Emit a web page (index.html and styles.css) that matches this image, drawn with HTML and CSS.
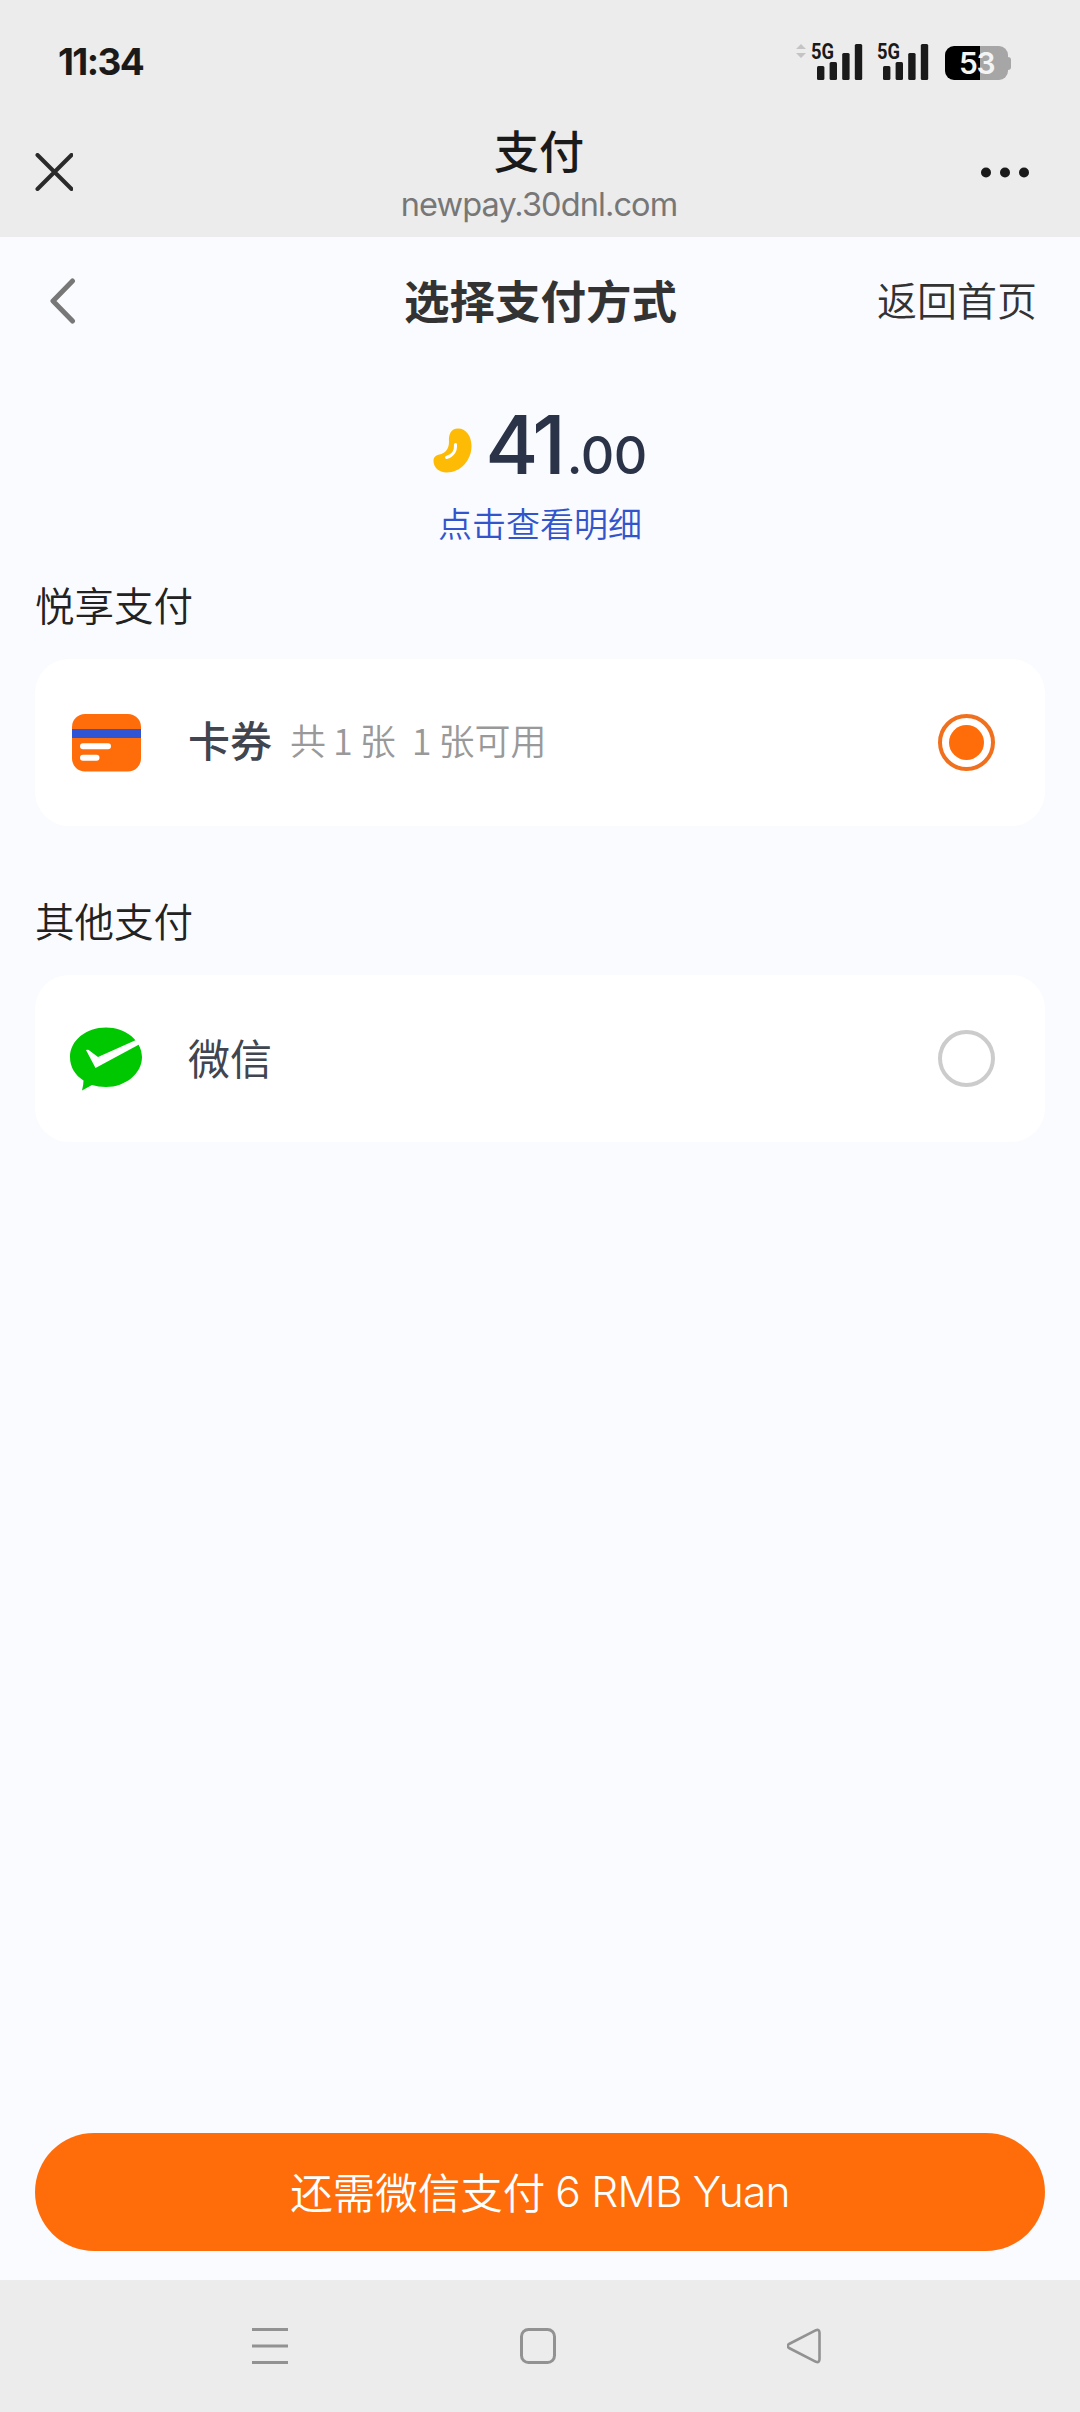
FILE: index.html
```html
<!DOCTYPE html>
<html lang="zh-CN">
<head>
  <meta charset="UTF-8" />
  <meta name="viewport" content="width=device-width, initial-scale=1.0"/>
  <title>支付</title>
  <link rel="stylesheet" href="styles.css">
</head>
<body>

  <div class="status-bar">
    <span class="time">11:34</span>
    <div class="status-icons">
      <svg class="signals" width="134" height="54" viewBox="795 32 134 54">
        <path d="M796 49l5-5 5 5zM796 53h10l-5 5z" fill="#c4c4c4"/>
        <g fill="#1a1a1a">
          <text class="net" x="811" y="59" textLength="23" lengthAdjust="spacingAndGlyphs">5G</text>
          <rect x="817" y="66" width="7.4" height="14" rx="1.5"/>
          <rect x="829.6" y="62" width="7.4" height="18" rx="1.5"/>
          <rect x="842.2" y="53" width="7.4" height="27" rx="1.5"/>
          <rect x="854.8" y="44" width="7.4" height="36" rx="1.5"/>
          <text class="net" x="877" y="59" textLength="23" lengthAdjust="spacingAndGlyphs">5G</text>
          <rect x="883" y="66" width="7.4" height="14" rx="1.5"/>
          <rect x="895.6" y="62" width="7.4" height="18" rx="1.5"/>
          <rect x="908.2" y="53" width="7.4" height="27" rx="1.5"/>
          <rect x="920.8" y="44" width="7.4" height="36" rx="1.5"/>
        </g>
      </svg>
      <div class="battery"><span>53</span></div>
    </div>
  </div>

  <header class="browser-bar">
    <svg class="close" width="38" height="38" viewBox="0 0 38 38">
      <path d="M2.500 2l34 34M36.500 2L2.500 36" stroke="#2a2a2a" stroke-width="4" stroke-linecap="round"/>
    </svg>
    <div class="browser-title">
      <h1>支付</h1>
      <p>newpay.30dnl.com</p>
    </div>
    <svg class="more" width="50" height="12" viewBox="0 0 50 12" fill="#1a1a1a">
      <circle cx="5" cy="5.500" r="5"/>
      <circle cx="24" cy="5.500" r="5"/>
      <circle cx="43" cy="5.500" r="5"/>
    </svg>
  </header>

  <main class="page">
    <div class="page-header">
      <svg class="back" width="28" height="46" viewBox="0 0 28 46">
        <path d="M23.500 3L4 23l19.500 20" fill="none" stroke="#777" stroke-width="5" stroke-linecap="round" stroke-linejoin="round"/>
      </svg>
      <h2>选择支付方式</h2>
      <a href="#" class="home-link">返回首页</a>
    </div>

    <div class="amount">
      <svg class="bean" width="39" height="45" viewBox="0 0 39 45">
        <path d="M25 .5C33 .5 38.500 8 38.500 18C38.500 32 28 44.500 13.500 44.500C6 44.500 .5 39.500 .5 33C.5 29 3 27 6.500 26.500C12 25.500 16 21 16 14C15.500 6 18 .5 25 .5z" fill="#fdbb05"/>
        <path d="M22.500 16.500C23 23 19.500 28 13.500 29.500" fill="none" stroke="#fff" stroke-width="3" stroke-linecap="round"/>
      </svg>
      <span class="amount-int">41</span><span class="amount-dec">.00</span>
    </div>
    <a href="#" class="detail-link">点击查看明细</a>

    <section class="pay-group">
      <h3>悦享支付</h3>
      <div class="pay-card">
        <svg class="pay-icon" width="72" height="64" viewBox="0 0 72 64">
          <rect x="2" y="3" width="69" height="57.500" rx="13" fill="#ff6d0a"/>
          <path d="M2 18h69v9H2z" fill="#2f55d4"/>
          <path d="M13 35.300h25M13 46.800h13.500" stroke="#fff" stroke-width="6" stroke-linecap="round"/>
        </svg>
        <span class="pay-name coupon">卡券</span>
        <span class="pay-note"><span>共</span><span>1</span><span>张</span><span>1</span><span>张可用</span></span>
        <span class="radio checked"></span>
      </div>
    </section>

    <section class="pay-group">
      <h3>其他支付</h3>
      <div class="pay-card">
        <svg class="pay-icon" width="72" height="64" viewBox="0 0 72 64">
          <path d="M36 .5C55.500 .5 72 13.500 72 30S55.500 60 36 60Q28 60 22 58L12 63.500Q13.500 58 13.500 53.500C5 48 0 40 0 30C0 13.500 16 .5 36 .5z" fill="#00c800"/>
          <path d="M16 23Q18.500 22 20 24L28 30L66 13L70 17L25.500 41Z" fill="#fff"/>
        </svg>
        <span class="pay-name">微信</span>
        <span class="radio"></span>
      </div>
    </section>

    <button class="pay-button">还需微信支付<span>6 RMB Yuan</span></button>
  </main>

  <nav class="system-nav">
    <svg width="36" height="36" viewBox="0 0 36 36">
      <path d="M0 1.500h36M0 18h36M0 34.500h36" stroke="#929292" stroke-width="3"/>
    </svg>
    <svg width="36" height="36" viewBox="0 0 36 36">
      <rect x="1.500" y="1.500" width="33" height="33" rx="7" fill="none" stroke="#929292" stroke-width="3"/>
    </svg>
    <svg width="36" height="36" viewBox="0 0 36 36">
      <path d="M29 2.200L2 16Q-.5 18 2 20L29 33.800Q32.500 35 32.500 31V5Q32.500 1 29 2.200z" fill="none" stroke="#929292" stroke-width="2.600" stroke-linejoin="round"/>
    </svg>
  </nav>

</body>
</html>
```

FILE: styles.css
```css
* {
  box-sizing: border-box;
}

body {
  margin: 0;
  height: 2412px;
  display: flex;
  flex-direction: column;
  font-family: Inter, "Noto Sans CJK SC", sans-serif;
  background-color: #fafbff;
  color: #222;
}

h1,
h2,
h3,
p {
  margin: 0;
  font-weight: 400;
}

a {
  text-decoration: none;
}

svg {
  display: block;
  flex-shrink: 0;
}

/* status bar */
.status-bar {
  height: 110px;
  padding: 32px 69px 0 58px;
  display: flex;
  justify-content: space-between;
  align-items: flex-start;
  background-color: #ececec;
}

.time {
  margin-top: 10px;
  font-size: 37px;
  font-weight: 700;
  line-height: 40px;
  letter-spacing: -1.6px;
  color: #1a1a1a;
}

.status-icons {
  display: flex;
  gap: 16px;
}

.net {
  font-family: Roboto, sans-serif;
  font-size: 22px;
  font-weight: 700;
}

.battery {
  width: 63px;
  height: 34px;
  margin-top: 14px;
  margin-right: 3px;
  position: relative;
  border-radius: 9px;
  background: linear-gradient(to right, #000 35px, #a6a6a6 35px);
  color: #f4f4f4;
  font-size: 30px;
  font-weight: 600;
  line-height: 35px;
  text-align: center;
}

.battery span {
  letter-spacing: -1.5px;
}

.battery::after {
  content: "";
  position: absolute;
  right: -3px;
  top: 11px;
  width: 3px;
  height: 13px;
  border-radius: 0 3px 3px 0;
  background-color: #a6a6a6;
}

/* browser bar */
.browser-bar {
  height: 127px;
  padding: 0 49px 0 35px;
  display: grid;
  grid-template-columns: 50px 1fr 50px;
  background-color: #ececec;
}

.close {
  margin-top: 43px;
}

.more {
  margin-top: 57px;
}

.browser-title {
  padding-top: 17px;
  padding-left: 12px;
  text-align: center;
}

.browser-title h1 {
  font-size: 45px;
  font-weight: 500;
  line-height: 52px;
  color: #1a1a1a;
}

.browser-title p {
  font-size: 32.5px;
  line-height: 51px;
  letter-spacing: -0.9px;
  color: #777;
}

/* page */
.page {
  flex: 1;
  padding: 0 35px;
  display: flex;
  flex-direction: column;
}

.page-header {
  height: 128px;
  padding: 0 8px 4px 14px;
  display: grid;
  grid-template-columns: 1fr auto 1fr;
  align-items: center;
}

.back {
  margin-top: 4px;
}

.page-header h2 {
  margin-right: 5px;
  font-size: 45.5px;
  font-weight: 700;
  color: #333;
}

.home-link {
  justify-self: end;
  font-size: 40px;
  font-weight: 350;
  color: #333;
}

.amount {
  height: 125px;
  padding-top: 31px;
  display: flex;
  justify-content: center;
  align-items: baseline;
  color: #2a3347;
}

.bean {
  align-self: flex-start;
  margin: 32px 13px 0 0;
}

.amount-int {
  font-size: 81px;
  font-weight: 500;
  line-height: 98px;
  letter-spacing: -4px;
}

.amount-dec {
  margin-left: 5px;
  font-size: 52px;
  font-weight: 500;
  letter-spacing: -0.5px;
}

.detail-link {
  margin-top: 9px;
  font-size: 34px;
  line-height: 52px;
  font-weight: 350;
  text-align: center;
  color: #3355cc;
}

.pay-group {
  margin-bottom: 65px;
}

.detail-link + .pay-group {
  margin-top: 24px;
}

.pay-group h3 {
  height: 84px;
  font-size: 39.5px;
  font-weight: 350;
  line-height: 65px;
}

.pay-card {
  height: 167px;
  padding: 0 50px 0 35px;
  display: flex;
  align-items: center;
  border-radius: 34px;
  background-color: #fff;
}

.pay-name {
  margin: -5px 0 0 46px;
  font-size: 42px;
  font-weight: 400;
  color: #404550;
}

.pay-name.coupon {
  margin-top: -9px;
  font-weight: 500;
}

.pay-note {
  margin: -7px 0 0 18px;
  display: flex;
  font-family: "Noto Sans CJK SC", sans-serif;
  font-size: 36px;
  font-weight: 350;
  color: #999;
}

.pay-note span:nth-child(2) {
  margin: 0 7px;
}

.pay-note span:nth-child(4) {
  margin: 0 7px 0 16px;
}

.radio {
  width: 57px;
  height: 57px;
  margin-left: auto;
  border: 4px solid #ccc;
  border-radius: 50%;
}

.radio.checked {
  padding: 7px;
  border-color: #f0701e;
  background: #ff6d0a content-box;
}

.pay-button {
  height: 118px;
  margin: auto 0 29px;
  padding: 0 0 3px;
  display: flex;
  justify-content: center;
  align-items: center;
  gap: 10px;
  border: none;
  border-radius: 59px;
  background-color: #ff6d0a;
  color: #fff;
  font-family: inherit;
  font-size: 42.5px;
  font-weight: 350;
}

.pay-button span {
  padding-top: 2px;
  letter-spacing: -0.8px;
}

/* android navigation */
.system-nav {
  height: 132px;
  padding: 48px 257px 0 252px;
  display: flex;
  justify-content: space-between;
  background-color: #ececec;
}
```
